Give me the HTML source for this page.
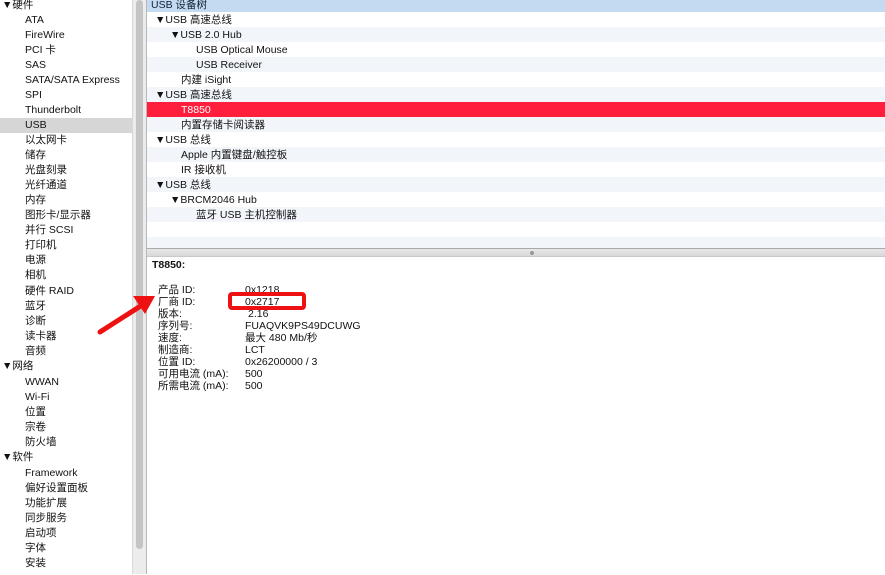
<!DOCTYPE html>
<html><head><meta charset="utf-8"><style>
*{margin:0;padding:0;box-sizing:border-box}
body{width:885px;height:574px;overflow:hidden;background:#fff;font-family:"Liberation Sans","Noto Sans CJK SC",sans-serif;font-size:10.5px;color:#111;position:relative}
.sb{position:absolute;left:0;top:1px;width:132px;height:574px;background:#fff}
.sb div{position:absolute;left:0;width:132px;height:15px;line-height:15px;padding-left:25px;white-space:nowrap}
.sb div.h{padding-left:2px}
.sb div.sel{background:#d6d6d6}
.scr{position:absolute;left:132px;top:0;width:15px;height:574px;background:#ececec;border-left:1px solid #d8d8d8;border-right:1px solid #b8b8b8}
.thumb{position:absolute;left:136px;top:0;width:7px;height:549px;border-radius:4px;background:#c4c4c4}
.tr{position:absolute;left:147px;top:0;width:738px;height:248px;background:#fff}
.tr div{position:absolute;left:0;width:738px;height:15px;line-height:17px;white-space:nowrap}
.st{background:#f2f6fb}
.hd{background:#c3daf1;color:#123;}
.red{background:#ff1f3c;color:#fff}
.dv{position:absolute;left:147px;top:248px;width:738px;height:9px;background:linear-gradient(#e8e8e8,#d9d9d9);border-top:1px solid #a9a9a9;border-bottom:1px solid #c8c8c8}
.dot{position:absolute;left:530px;top:251px;width:4px;height:4px;border-radius:2px;background:#999}
.det{position:absolute;left:147px;top:257px;width:738px;height:317px}
.det div{position:absolute;white-space:nowrap;height:12px;line-height:12px}
</style></head><body>
<div class="sb">
<div class="h" style="top:-3px">▼硬件</div>
<div style="top:12px">ATA</div>
<div style="top:27px">FireWire</div>
<div style="top:42px">PCI 卡</div>
<div style="top:57px">SAS</div>
<div style="top:72px">SATA/SATA Express</div>
<div style="top:87px">SPI</div>
<div style="top:102px">Thunderbolt</div>
<div class="sel" style="top:117px">USB</div>
<div style="top:132px">以太网卡</div>
<div style="top:147px">储存</div>
<div style="top:162px">光盘刻录</div>
<div style="top:177px">光纤通道</div>
<div style="top:192px">内存</div>
<div style="top:207px">图形卡/显示器</div>
<div style="top:222px">并行 SCSI</div>
<div style="top:237px">打印机</div>
<div style="top:252px">电源</div>
<div style="top:267px">相机</div>
<div style="top:283px">硬件 RAID</div>
<div style="top:298px">蓝牙</div>
<div style="top:313px">诊断</div>
<div style="top:328px">读卡器</div>
<div style="top:343px">音频</div>
<div class="h" style="top:358px">▼网络</div>
<div style="top:374px">WWAN</div>
<div style="top:389px">Wi-Fi</div>
<div style="top:404px">位置</div>
<div style="top:419px">宗卷</div>
<div style="top:434px">防火墙</div>
<div class="h" style="top:449px">▼软件</div>
<div style="top:465px">Framework</div>
<div style="top:480px">偏好设置面板</div>
<div style="top:495px">功能扩展</div>
<div style="top:510px">同步服务</div>
<div style="top:525px">启动项</div>
<div style="top:540px">字体</div>
<div style="top:555px">安装</div>
</div>
<div class="scr"></div><div class="thumb"></div>
<div class="tr">
<div class="hd" style="top:-3px;padding-left:4px">USB 设备树</div>
<div style="top:12px;padding-left:8px">▼USB 高速总线</div>
<div class="st" style="top:27px;padding-left:23px">▼USB 2.0 Hub</div>
<div style="top:42px;padding-left:49px">USB Optical Mouse</div>
<div class="st" style="top:57px;padding-left:49px">USB Receiver</div>
<div style="top:72px;padding-left:34px">内建 iSight</div>
<div class="st" style="top:87px;padding-left:8px">▼USB 高速总线</div>
<div class="red" style="top:102px;padding-left:34px">T8850</div>
<div class="st" style="top:117px;padding-left:34px">内置存储卡阅读器</div>
<div style="top:132px;padding-left:8px">▼USB 总线</div>
<div class="st" style="top:147px;padding-left:34px">Apple 内置键盘/触控板</div>
<div style="top:162px;padding-left:34px">IR 接收机</div>
<div class="st" style="top:177px;padding-left:8px">▼USB 总线</div>
<div style="top:192px;padding-left:23px">▼BRCM2046 Hub</div>
<div class="st" style="top:207px;padding-left:49px">蓝牙 USB 主机控制器</div>
<div class="st" style="top:237px;height:11px"></div>
</div>
<div class="dv"></div><div class="dot"></div>
<div class="det">
<div style="left:5px;top:2px;font-weight:bold">T8850:</div>
<div style="left:11px;top:27px">产品 ID:</div><div style="left:98px;top:27px">0x1218</div>
<div style="left:11px;top:39px">厂商 ID:</div><div style="left:98px;top:39px">0x2717</div>
<div style="left:11px;top:51px">版本:</div><div style="left:101px;top:51px">2.16</div>
<div style="left:11px;top:63px">序列号:</div><div style="left:98px;top:63px">FUAQVK9PS49DCUWG</div>
<div style="left:11px;top:75px">速度:</div><div style="left:98px;top:75px">最大 480 Mb/秒</div>
<div style="left:11px;top:87px">制造商:</div><div style="left:98px;top:87px">LCT</div>
<div style="left:11px;top:99px">位置 ID:</div><div style="left:98px;top:99px">0x26200000 / 3</div>
<div style="left:11px;top:111px">可用电流 (mA):</div><div style="left:98px;top:111px">500</div>
<div style="left:11px;top:123px">所需电流 (mA):</div><div style="left:98px;top:123px">500</div>
</div>
<div style="position:absolute;left:228px;top:292px;width:78px;height:18px;border:4px solid #ee1111;border-radius:4px"></div>
<svg style="position:absolute;left:95px;top:290px" width="70" height="50"><path d="M5 42 L55 10" stroke="#ee1111" stroke-width="5" stroke-linecap="round"/><path d="M38 6 L60 6 L50 24 Z" fill="#ee1111"/></svg>
</body></html>
